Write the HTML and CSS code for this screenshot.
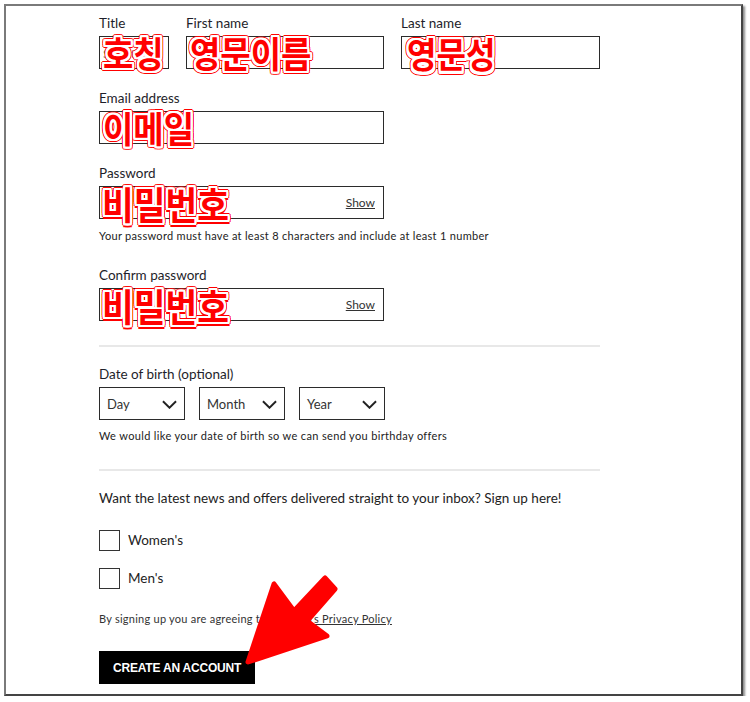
FILE: index.html
```html
<!DOCTYPE html>
<html lang="en">
	<head>
		<meta charset="UTF-8">
		<meta name="viewport" content="width=device-width, initial-scale=1.0">
		<title>Create an account</title>
		<link rel="stylesheet" href="styles.css">
	</head>
	<body>
		<div class="shot">
			<form class="register">
				<div class="row name-row">
					<div class="field field-title">
						<label>Title</label>
						<div class="box"><span class="placeholder">Select</span><span class="mark">호칭</span></div>
					</div>
					<div class="field field-first">
						<label>First name</label>
						<div class="box"><span class="mark">영문이름</span></div>
					</div>
					<div class="field field-last">
						<label>Last name</label>
						<div class="box"><span class="mark shift">영문성</span></div>
					</div>
				</div>

				<div class="field field-wide">
					<label>Email address</label>
					<div class="box"><span class="mark">이메일</span></div>
				</div>

				<div class="field field-wide has-note">
					<label>Password</label>
					<div class="box"><span class="mark big">비밀번호</span><a class="show">Show</a></div>
					<p class="note">Your password must have at least 8 characters and include at least 1 number</p>
				</div>

				<div class="field field-wide last">
					<label>Confirm password</label>
					<div class="box"><span class="mark big">비밀번호</span><a class="show">Show</a></div>
				</div>

				<hr class="divider">

				<div class="field dob">
					<label>Date of birth (optional)</label>
					<div class="row select-row">
						<div class="select">Day<svg viewBox="0 0 16 9"><path d="M1 1l7 7 7-7"/></svg></div>
						<div class="select">Month<svg viewBox="0 0 16 9"><path d="M1 1l7 7 7-7"/></svg></div>
						<div class="select">Year<svg viewBox="0 0 16 9"><path d="M1 1l7 7 7-7"/></svg></div>
					</div>
					<p class="note">We would like your date of birth so we can send you birthday offers</p>
				</div>

				<hr class="divider">

				<p class="signup">Want the latest news and offers delivered straight to your inbox? Sign up here!</p>

				<div class="checks">
					<label class="check"><span class="tick"></span>Women's</label>
					<label class="check"><span class="tick"></span>Men's</label>
				</div>

				<p class="terms">By signing up you are agreeing to <a>Topshop's Privacy Policy</a></p>

				<button type="button" class="create">CREATE AN ACCOUNT</button>
			</form>

			<svg class="arrow" viewBox="240 570 105 100">
				<polygon points="248,662 327,636 307,621 335,589 325,578 294,611 274,584"/>
			</svg>
		</div>
	</body>
</html>
```

FILE: styles.css
```css
body {
	margin: 0;
	background: #fff;
	font-family: Lato, "Liberation Sans", sans-serif;
	color: #222;
}
.shot {
	position: relative;
	margin: 4px 0 0 4px;
	width: 739px;
	height: 692px;
	box-sizing: border-box;
	border: 2px solid #444;
	border-top-color: #7a7a7a;
	border-left-color: #7a7a7a;
	box-shadow: 2px 2px 2px rgba(0, 0, 0, 0.45);
	background: #fff;
	overflow: hidden;
}
.register {
	width: 501px;
	padding: 8px 0 0 93px;
	margin: 0;
}
.row {
	display: flex;
}
.name-row {
	gap: 17px;
}
.field {
	margin-bottom: 20px;
}
.field.has-note {
	margin-bottom: 23px;
}
.field.last {
	margin-bottom: 0;
}
.field label {
	display: block;
	font-size: 13.5px;
	line-height: 18px;
	margin-bottom: 4px;
	color: #1e1e2a;
}
.field-title {
	width: 70px;
}
.field-first {
	width: 198px;
}
.field-last {
	width: 199px;
}
.field-wide {
	width: 285px;
}
.box {
	position: relative;
	height: 33px;
	box-sizing: border-box;
	border: 1px solid #2b2b2b;
	display: flex;
	align-items: center;
	justify-content: flex-end;
	padding: 0 8px;
}
.placeholder {
	position: absolute;
	left: 3px;
	top: 9px;
	font-size: 12px;
	color: #888;
}
.mark {
	position: absolute;
	left: 3px;
	top: 50%;
	transform: translateY(-50%) scaleY(1.1);
	font-family: "Noto Sans CJK KR", sans-serif;
	font-weight: 700;
	font-size: 33px;
	line-height: 1;
	color: #ff0000;
	white-space: nowrap;
	text-shadow:
		2px 0 0 #fff, -2px 0 0 #fff, 0 2px 0 #fff, 0 -2px 0 #fff,
		2px 2px 0 #fff, -2px -2px 0 #fff, 2px -2px 0 #fff, -2px 2px 0 #fff,
		1px 2px 0 #fff, 2px 1px 0 #fff, -1px -2px 0 #fff, -2px -1px 0 #fff,
		1px -2px 0 #fff, -2px 1px 0 #fff, 2px -1px 0 #fff, -1px 2px 0 #fff,
		3px 0 0 #f00, -3px 0 0 #f00, 0 3px 0 #f00, 0 -3px 0 #f00,
		3px 2px 0 #f00, -3px -2px 0 #f00, 2px -3px 0 #f00, -2px 3px 0 #f00,
		2px 3px 0 #f00, 3px -2px 0 #f00, -3px 2px 0 #f00, -2px -3px 0 #f00;
	z-index: 1;
}
.mark.shift {
	left: 5px;
	font-size: 32px;
}
.mark.big {
	left: 2px;
	font-size: 34.5px;
}
.show {
	font-size: 12px;
	color: #333;
	text-decoration: underline;
}
.note {
	margin: 10px 0 0;
	font-size: 11px;
	line-height: 14px;
	letter-spacing: 0.3px;
	color: #222;
	white-space: nowrap;
}
.dob .note {
	margin-top: 9px;
	letter-spacing: 0.35px;
}
.divider {
	border: 0;
	height: 2px;
	background: #e8e8e8;
	margin: 24px 0 18px;
}
.dob + .divider {
	margin-top: 26px;
}
.dob {
	margin-bottom: 0;
}
.select-row {
	gap: 14px;
}
.select {
	width: 86px;
	height: 33px;
	box-sizing: border-box;
	border: 1px solid #2b2b2b;
	display: flex;
	align-items: center;
	justify-content: space-between;
	padding: 1px 7px 0 7px;
	font-size: 13px;
	color: #333;
}
.select svg {
	width: 15px;
	height: 9px;
	fill: none;
	stroke: #222;
	stroke-width: 2;
}
.signup {
	margin: 0;
	font-size: 13.5px;
	line-height: 18px;
	color: #222;
}
.checks {
	margin-top: 22px;
	display: flex;
	flex-direction: column;
	gap: 16px;
}
.check {
	display: flex;
	align-items: center;
	gap: 8px;
	font-size: 13.5px;
	line-height: 22px;
	color: #222;
}
.tick {
	width: 21px;
	height: 21px;
	box-sizing: border-box;
	border: 1px solid #333;
}
.terms {
	margin: 23px 0 0;
	font-size: 11px;
	line-height: 14px;
	letter-spacing: 0.25px;
	color: #333;
}
.terms a {
	text-decoration: underline;
}
.create {
	margin-top: 25px;
	height: 33px;
	padding: 0 14px;
	border: 0;
	background: #000;
	color: #fff;
	font-family: "Liberation Sans", Arial, sans-serif;
	font-weight: 700;
	font-size: 12px;
	letter-spacing: -0.2px;
}
.arrow {
	position: absolute;
	left: 234px;
	top: 564px;
	width: 105px;
	height: 100px;
	fill: #ff0000;
	stroke: #ff0000;
	stroke-width: 5;
	stroke-linejoin: round;
}
```
